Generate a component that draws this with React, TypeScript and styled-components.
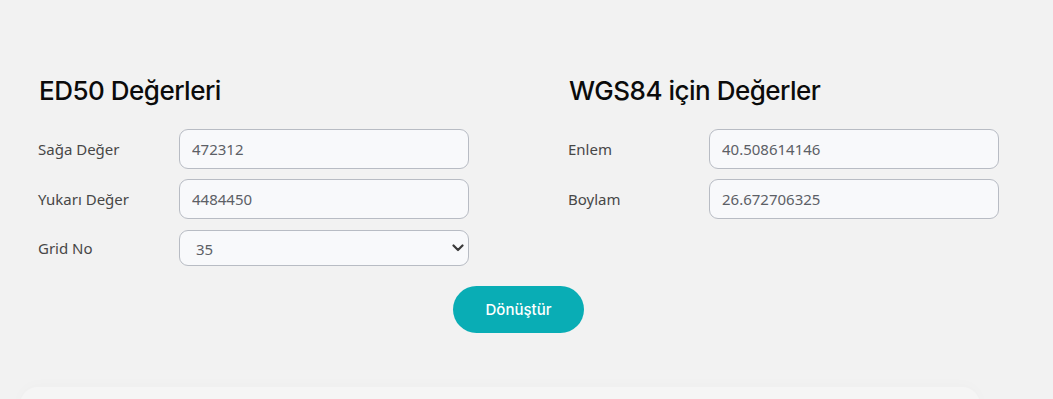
import React, { FunctionComponent, useState } from 'react';
import styled, { createGlobalStyle } from 'styled-components';

const GlobalStyle = createGlobalStyle`
  body {
    margin: 0;
    background: #f2f2f2;
    font-family: "Noto Sans", "Open Sans", sans-serif;
    overflow: hidden;
  }
`

type Field = { label: string; value: string }

const ed50: Field[] = [
    { label: 'Sağa Değer', value: '472312' },
    { label: 'Yukarı Değer', value: '4484450' },
]

const wgs84: Field[] = [
    { label: 'Enlem', value: '40.508614146' },
    { label: 'Boylam', value: '26.672706325' },
]

const App: FunctionComponent = () => {
    const [grid, setGrid] = useState('35');
    return (
        <>
            <GlobalStyle />
            <Page>
                <Columns>
                    <Section>
                        <Heading>ED50 Değerleri</Heading>
                        {ed50.map(f => (
                            <Row key={f.label}>
                                <Label>{f.label}</Label>
                                <Input defaultValue={f.value} />
                            </Row>
                        ))}
                        <Row $select>
                            <Label>Grid No</Label>
                            <SelectWrap>
                                <Select value={grid} onChange={e => setGrid(e.target.value)}>
                                    <option value="35">35</option>
                                    <option value="36">36</option>
                                </Select>
                                <Chevron width="12" height="8" viewBox="0 0 12 8">
                                    <path d="M1.5 1.5 L6 6 L10.5 1.5" fill="none" stroke="#3a3a3a" strokeWidth="2.2" strokeLinecap="round" strokeLinejoin="round" />
                                </Chevron>
                            </SelectWrap>
                        </Row>
                    </Section>
                    <Section>
                        <Heading>WGS84 için Değerler</Heading>
                        {wgs84.map(f => (
                            <Row key={f.label}>
                                <Label>{f.label}</Label>
                                <Input defaultValue={f.value} />
                            </Row>
                        ))}
                    </Section>
                </Columns>
                <ButtonRow>
                    <ConvertButton>Dönüştür</ConvertButton>
                </ButtonRow>
                <Card />
            </Page>
        </>
    );
}

const Page = styled.div`
  width: 961px;
  padding: 74px 0 0 38px;
`
const Columns = styled.div`
  display: grid;
  grid-template-columns: 431px 431px;
  column-gap: 99px;
`
const Section = styled.div`
  display: flex;
  flex-direction: column;
`
const Heading = styled.h2`
  font-family: Inter, "Noto Sans", sans-serif;
  font-weight: 500;
  font-size: 26px;
  letter-spacing: -0.5px;
  line-height: 34px;
  color: #0b0b0b;
  margin: 0 0 21px 1px;
`
const Row = styled.div<{ $select?: boolean }>`
  display: grid;
  grid-template-columns: 141px 290px;
  align-items: center;
  margin-bottom: ${p => (p.$select ? '0' : '10px')};
  margin-top: ${p => (p.$select ? '1px' : '0')};
`
const Label = styled.label`
  font-size: 15px;
  color: #474747;
`
const Input = styled.input`
  box-sizing: border-box;
  height: 40px;
  width: 290px;
  padding: 0 12px;
  border: 1px solid #b8bcc4;
  border-radius: 9px;
  background: #f8f9fb;
  font-family: "Noto Sans", sans-serif;
  font-size: 15px;
  color: #5c6066;
  outline: none;
`
const SelectWrap = styled.div`
  position: relative;
  width: 290px;
`
const Select = styled.select`
  box-sizing: border-box;
  appearance: none;
  height: 36px;
  width: 290px;
  padding: 2px 16px 0;
  border: 1px solid #b8bcc4;
  border-radius: 9px;
  background: #f8f9fb;
  font-family: "Noto Sans", sans-serif;
  font-size: 15px;
  color: #5c6066;
  outline: none;
`
const Chevron = styled.svg`
  position: absolute;
  right: 5px;
  top: 14px;
  pointer-events: none;
`
const ButtonRow = styled.div`
  display: flex;
  justify-content: center;
  margin-top: 20px;
`
const ConvertButton = styled.button`
  width: 131px;
  height: 47px;
  border: none;
  border-radius: 24px;
  background: #09adb5;
  color: #ffffff;
  font-family: Inter, "Noto Sans", sans-serif;
  font-weight: 500;
  font-size: 15px;
  cursor: pointer;
`
const Card = styled.div`
  margin: 54px 0 0 -18px;
  width: 960px;
  height: 60px;
  border-radius: 18px;
  background: #f5f5f5;
  box-shadow: 0 -2px 14px rgba(0, 0, 0, 0.02);
`

export default App;
